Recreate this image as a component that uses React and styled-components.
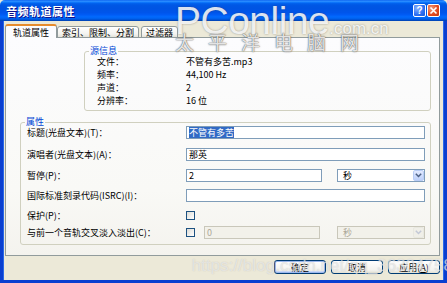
import styled, { createGlobalStyle } from 'styled-components';

const GlobalStyle = createGlobalStyle`
  html, body {
    margin: 0;
    padding: 0;
    background: #ece9d8;
  }
  body {
    font-family: "Noto Sans CJK SC", "Liberation Sans", sans-serif;
    font-size: 9px;
    color: #000;
  }
`;

const sourceInfo = [
  { label: '文件：', value: '不管有多苦.mp3' },
  { label: '频率：', value: '44,100 Hz' },
  { label: '声道：', value: '2' },
  { label: '分辨率：', value: '16 位' },
];

const App = () => {
  return (
    <>
      <GlobalStyle />
      <Window>
        <TitleBar>
          <Title>音频轨道属性</Title>
          <TitleButtons>
            <CaptionButton>?</CaptionButton>
            <CaptionButton $close>
              <svg width="9" height="9" viewBox="0 0 9 9">
                <path d="M1.5 1.5 L7.5 7.5 M7.5 1.5 L1.5 7.5" stroke="#fff" strokeWidth="1.6" />
              </svg>
            </CaptionButton>
          </TitleButtons>
        </TitleBar>

        <Body>
          <TabStrip>
            <Tab $active>轨道属性</Tab>
            <Tab>索引、限制、分割</Tab>
            <Tab $gap>过滤器</Tab>
          </TabStrip>

          <Panel>
            <GroupBox $left={78} $top={8} $width={347} $bottom={3}>
              <Legend>源信息</Legend>
              <InfoGrid>
                {sourceInfo.map((row) => (
                  <InfoRow key={row.label}>
                    <span>{row.label}</span>
                    <span>{row.value}</span>
                  </InfoRow>
                ))}
              </InfoGrid>
            </GroupBox>

            <GroupBox $left={14} $top={6} $width={411} $bottom={5}>
              <Legend>属性</Legend>
              <FieldList>
                <FieldRow $mt={-1}>
                  <Label>标题(光盘文本)(T)：</Label>
                  <TextBox $width={239}>
                    <Selected>不管有多苦</Selected>
                  </TextBox>
                </FieldRow>
                <FieldRow $mt={9}>
                  <Label>演唱者(光盘文本)(A)：</Label>
                  <TextBox $width={239}>那英</TextBox>
                </FieldRow>
                <FieldRow $mt={8}>
                  <Label>暂停(P)：</Label>
                  <TextBox $width={136}>2</TextBox>
                  <Select $ml={15}>
                    <span>秒</span>
                    <DropButton>
                      <Chevron />
                    </DropButton>
                  </Select>
                </FieldRow>
                <FieldRow $mt={7}>
                  <Label>国际标准刻录代码(ISRC)(I)：</Label>
                  <TextBox $width={239} />
                </FieldRow>
                <FieldRow $mt={7}>
                  <Label>保护(P)：</Label>
                  <CheckBox />
                </FieldRow>
                <FieldRow $mt={4}>
                  <Label>与前一个音轨交叉淡入淡出(C)：</Label>
                  <CheckBox />
                  <TextBox $width={116} $disabled $ml={9}>0</TextBox>
                  <Select $ml={17} $disabled>
                    <span>秒</span>
                    <DropButton $disabled>
                      <Chevron $disabled />
                    </DropButton>
                  </Select>
                </FieldRow>
              </FieldList>
            </GroupBox>
          </Panel>

          <Footer>
            <PushButton $default>确定</PushButton>
            <PushButton>取消</PushButton>
            <PushButton>应用(<u>A</u>)</PushButton>
          </Footer>
        </Body>

        <BrandMark>
          <BrandLine>
            PConline<BrandSmall>.com.cn</BrandSmall>
          </BrandLine>
          <BrandCn>太平洋电脑网</BrandCn>
        </BrandMark>
        <BlogMark>https://blog.csdn.net/qq_36304758</BlogMark>
      </Window>
    </>
  );
};

const Chevron = ({ $disabled }) => (
  <svg width="7" height="5" viewBox="0 0 7 5">
    <path
      d="M0.8 0.8 L3.5 3.5 L6.2 0.8"
      fill="none"
      stroke={$disabled ? '#c3c8d6' : '#4d6185'}
      strokeWidth="1.5"
    />
  </svg>
);

export default App;

const Window = styled.div`
  position: relative;
  width: 447px;
  height: 283px;
  display: flex;
  flex-direction: column;
  overflow: hidden;
  background: #ece9d8;
`;

const TitleBar = styled.div`
  height: 21px;
  flex: none;
  display: flex;
  align-items: center;
  justify-content: space-between;
  padding: 0 7px 0 6px;
  background: linear-gradient(
    #0058ee 0%,
    #3593ff 5%,
    #127dff 10%,
    #0262ee 16%,
    #0057e5 24%,
    #0054e3 40%,
    #0055eb 60%,
    #005bf5 70%,
    #026afe 80%,
    #0062ef 88%,
    #0052d6 94%,
    #0040ab 100%
  );
  border-radius: 5px 5px 0 0;
`;

const Title = styled.div`
  color: #fff;
  font-weight: bold;
  font-size: 11px;
  letter-spacing: 0.5px;
  text-shadow: 1px 1px 0 #0f1089;
`;

const TitleButtons = styled.div`
  display: flex;
  gap: 1px;
  z-index: 2;
`;

const CaptionButton = styled.div`
  width: 13px;
  height: 13px;
  box-sizing: border-box;
  border: 1px solid #fff;
  border-radius: 2px;
  display: flex;
  align-items: center;
  justify-content: center;
  color: #fff;
  font-family: "Liberation Sans", sans-serif;
  font-weight: bold;
  font-size: 10px;
  background: ${(p) =>
    p.$close
      ? 'radial-gradient(circle at 30% 30%, #f19a7a, #e0481e 60%, #c23a12)'
      : 'radial-gradient(circle at 30% 30%, #8db4ff, #2b6ef2 60%, #1d58d8)'};
`;

const Body = styled.div`
  flex: 1;
  display: flex;
  flex-direction: column;
  padding: 3px 4px 0 2px;
  border: 3px solid #0a3fd0;
  border-top: none;
  box-shadow: inset 1px 0 0 #2a68e8, inset -1px 0 0 #2a68e8;
`;

const TabStrip = styled.div`
  display: flex;
  align-items: flex-end;
  height: 14px;
  position: relative;
  z-index: 1;
  margin-bottom: -1px;
`;

const Tab = styled.div`
  height: ${(p) => (p.$active ? '14px' : '12px')};
  box-sizing: border-box;
  padding: 0 ${(p) => (p.$active ? '7px' : '4px')};
  margin-left: ${(p) => (p.$gap ? '2px' : '0')};
  display: flex;
  align-items: center;
  border: 1px solid #919b9c;
  border-bottom: ${(p) => (p.$active ? 'none' : '1px solid #919b9c')};
  border-top: ${(p) => (p.$active ? '2px solid #e68b2c' : '1px solid #919b9c')};
  border-radius: 3px 3px 0 0;
  background: ${(p) =>
    p.$active ? '#fcfcfe' : 'linear-gradient(#ffffff, #f3f3ef 70%, #e3e2da)'};
  font-size: 9px;
  line-height: 1;
  white-space: nowrap;
`;

const Panel = styled.div`
  height: 219px;
  box-sizing: border-box;
  border: 1px solid #919b9c;
  background: linear-gradient(#fcfcfe, #f9f9f6 70%, #f4f3ee);
  display: flex;
  flex-direction: column;
  align-items: flex-start;
`;

const GroupBox = styled.fieldset`
  margin: ${(p) => p.$top}px 0 0 ${(p) => p.$left}px;
  width: ${(p) => p.$width}px;
  box-sizing: border-box;
  padding: 0 0 ${(p) => p.$bottom}px;
  border: 1px solid #d0d0bf;
  border-radius: 3px;
  min-width: 0;
`;

const Legend = styled.legend`
  color: #0046d5;
  font-size: 9px;
  line-height: 10px;
  padding: 0 1px;
  margin-left: 4px;
`;

const InfoGrid = styled.div`
  display: grid;
  grid-auto-rows: 13px;
  margin-top: -1px;
  padding-left: 12px;
`;

const InfoRow = styled.div`
  display: grid;
  grid-template-columns: 89px 1fr;
  align-items: center;
  font-size: 9px;
`;

const FieldList = styled.div`
  display: flex;
  flex-direction: column;
  padding-left: 6px;
`;

const FieldRow = styled.div`
  display: flex;
  align-items: center;
  height: 13px;
  margin-top: ${(p) => p.$mt}px;
`;

const Label = styled.div`
  width: 159px;
  flex: none;
  font-size: 9px;
  white-space: nowrap;
`;

const TextBox = styled.div`
  width: ${(p) => p.$width}px;
  height: 13px;
  box-sizing: border-box;
  margin-left: ${(p) => p.$ml || 0}px;
  padding: 0 2px;
  display: flex;
  align-items: center;
  border: 1px solid ${(p) => (p.$disabled ? '#c9c7ba' : '#7f9db9')};
  background: ${(p) => (p.$disabled ? '#f2f1ea' : '#fff')};
  color: ${(p) => (p.$disabled ? '#aca899' : '#000')};
  font-size: 9px;
  line-height: 1;
`;

const Selected = styled.span`
  background: #316ac5;
  color: #fff;
  padding: 1px 0;
`;

const Select = styled.div`
  width: 88px;
  height: 13px;
  box-sizing: border-box;
  margin-left: ${(p) => p.$ml}px;
  padding-left: 5px;
  display: flex;
  align-items: center;
  justify-content: space-between;
  border: 1px solid ${(p) => (p.$disabled ? '#c9c7ba' : '#7f9db9')};
  background: ${(p) => (p.$disabled ? '#f2f1ea' : '#fff')};
  color: ${(p) => (p.$disabled ? '#aca899' : '#000')};
  font-size: 9px;
`;

const DropButton = styled.div`
  width: 11px;
  height: 11px;
  box-sizing: border-box;
  display: flex;
  align-items: center;
  justify-content: center;
  border: 1px solid ${(p) => (p.$disabled ? '#e8e8e0' : '#b9cdf5')};
  border-radius: 2px;
  background: ${(p) =>
    p.$disabled ? '#f0efe8' : 'linear-gradient(#e2eaff, #bdd0fa)'};
`;

const CheckBox = styled.div`
  width: 9px;
  height: 9px;
  flex: none;
  box-sizing: border-box;
  border: 1px solid #1c5180;
  background: linear-gradient(135deg, #dcdcd6, #fff);
`;

const Footer = styled.div`
  display: flex;
  justify-content: flex-end;
  gap: 5px;
  margin-top: 4px;
`;

const PushButton = styled.div`
  width: 52px;
  height: 14px;
  box-sizing: border-box;
  display: flex;
  align-items: center;
  justify-content: center;
  border: 1px solid #003c74;
  border-radius: 3px;
  background: linear-gradient(#ffffff, #f3f3ef 75%, #e2e0d4);
  box-shadow: ${(p) =>
    p.$default ? 'inset 0 0 0 1px #9bb7ee, inset 0 -1px 0 1px #cad9f7' : 'none'};
  font-size: 9px;
  line-height: 1;
`;

const BrandMark = styled.div`
  position: absolute;
  left: 175px;
  top: 1px;
  pointer-events: none;
  color: rgba(255, 255, 255, 0.85);
  text-shadow: 0 0 2px rgba(60, 60, 60, 0.5);
`;

const BrandLine = styled.div`
  font-family: "Liberation Sans", sans-serif;
  font-size: 39px;
  line-height: 40px;
  letter-spacing: -0.5px;
  white-space: nowrap;
`;

const BrandSmall = styled.span`
  font-size: 17px;
  letter-spacing: 0;
`;

const BrandCn = styled.div`
  margin-top: -17px;
  font-size: 19px;
  line-height: 19px;
  letter-spacing: 14px;
  white-space: nowrap;
  color: rgba(255, 255, 255, 0.85);
  text-shadow: 0 0 1px rgba(50, 50, 50, 0.9), 0 0 2px rgba(90, 90, 90, 0.6);
`;

const BlogMark = styled.div`
  position: absolute;
  left: 192px;
  top: 256px;
  pointer-events: none;
  font-family: "Liberation Sans", sans-serif;
  font-size: 17px;
  color: rgba(255, 255, 255, 0.55);
  text-shadow: 0 0 1px rgba(150, 150, 150, 0.5);
  white-space: nowrap;
`;
